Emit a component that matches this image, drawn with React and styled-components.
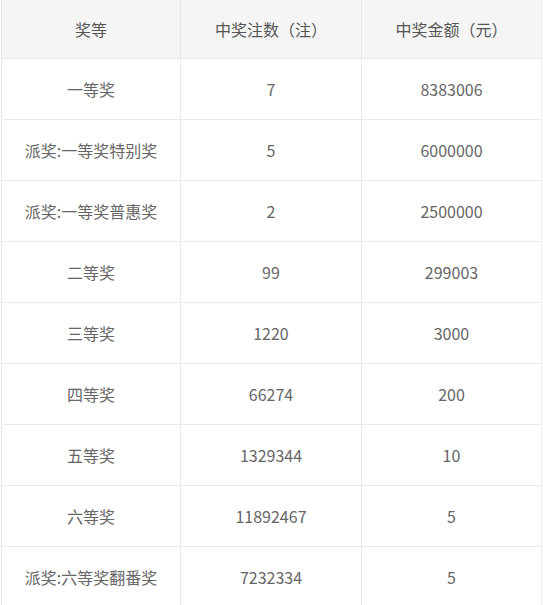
import React from 'react'
import styled, { createGlobalStyle } from 'styled-components'

const GlobalStyle = createGlobalStyle`
  html, body {
    margin: 0;
    padding: 0;
    background: #fff;
  }
  body {
    font-family: 'Noto Sans CJK SC', 'Noto Sans', sans-serif;
  }
`

const Wrapper = styled.div`
  padding-left: 1px;
  margin-top: -1px;
`

const Table = styled.table`
  width: 540px;
  border-collapse: collapse;
  table-layout: fixed;
  font-size: 16px;
  color: #666;
`

const HeadCell = styled.th`
  height: 58px;
  padding: 0;
  background: #f5f5f5;
  border: 1px solid #e8e8e8;
  font-weight: normal;
  color: #555;
  text-align: center;
`

const Cell = styled.td`
  height: 60px;
  padding: 0;
  border: 1px solid #ebebeb;
  text-align: center;
`

const rows = [
  ['一等奖', '7', '8383006'],
  ['派奖:一等奖特别奖', '5', '6000000'],
  ['派奖:一等奖普惠奖', '2', '2500000'],
  ['二等奖', '99', '299003'],
  ['三等奖', '1220', '3000'],
  ['四等奖', '66274', '200'],
  ['五等奖', '1329344', '10'],
  ['六等奖', '11892467', '5'],
  ['派奖:六等奖翻番奖', '7232334', '5'],
]

export default function App() {
  return (
    <Wrapper>
      <GlobalStyle />
      <Table>
        <colgroup>
          <col style={{ width: 179 }} />
          <col style={{ width: 181 }} />
          <col style={{ width: 180 }} />
        </colgroup>
        <thead>
          <tr>
            <HeadCell>奖等</HeadCell>
            <HeadCell>中奖注数（注）</HeadCell>
            <HeadCell>中奖金额（元）</HeadCell>
          </tr>
        </thead>
        <tbody>
          {rows.map(r => (
            <tr key={r[0]}>
              <Cell>{r[0]}</Cell>
              <Cell>{r[1]}</Cell>
              <Cell>{r[2]}</Cell>
            </tr>
          ))}
        </tbody>
      </Table>
    </Wrapper>
  )
}
